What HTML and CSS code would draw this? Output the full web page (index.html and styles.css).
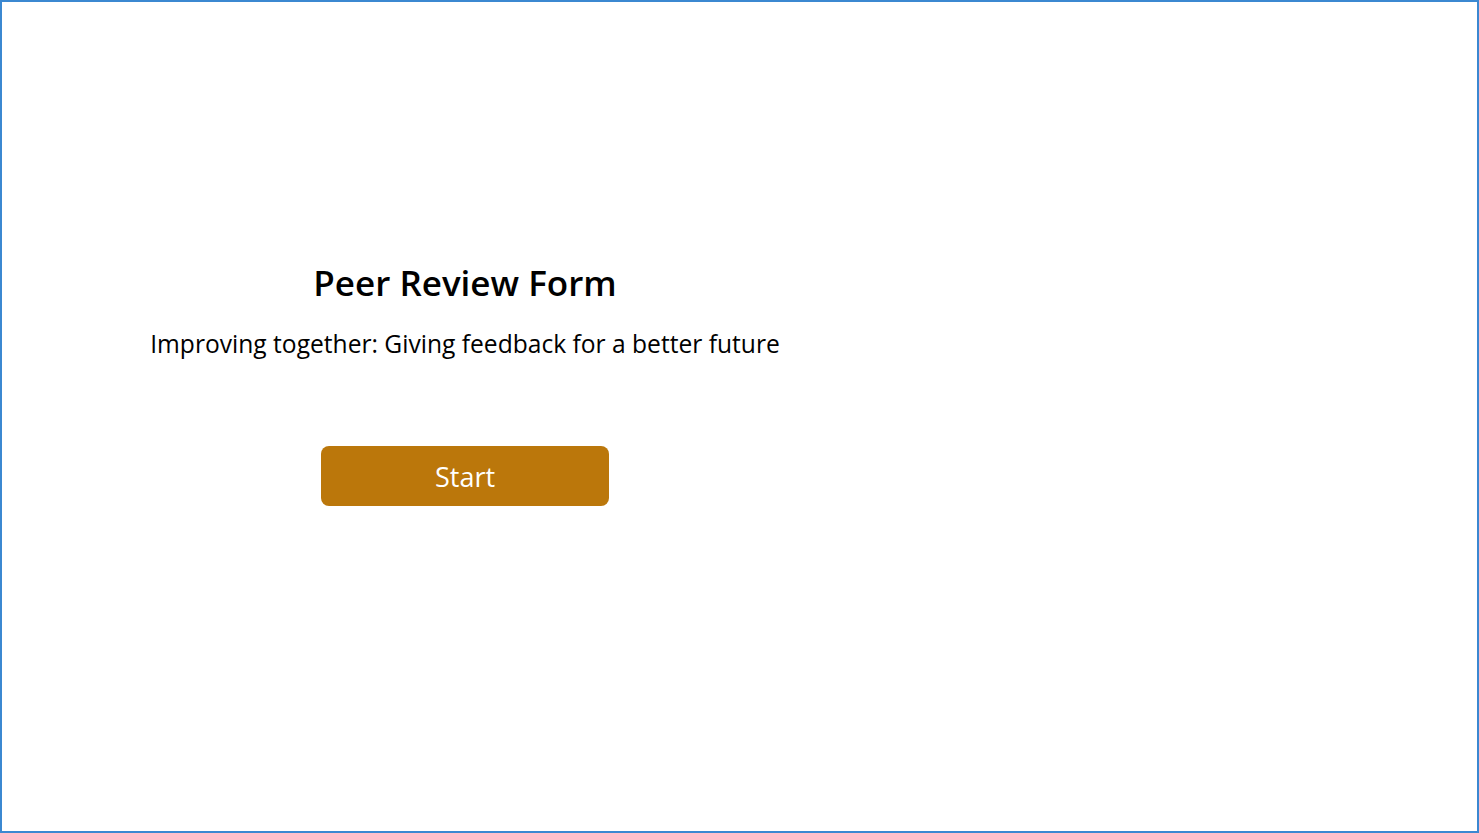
FILE: index.html
```html
<!DOCTYPE html>
<html lang="en">
<head>
    <meta charset="UTF-8">
    <meta name="viewport" content="width=device-width, initial-scale=1.0">
    <title>Peer Review Form</title>
    <link rel="stylesheet" href="styles.css">
</head>
<body>

    <div class="frame">
        <div class="intro">
            <h1>Peer Review Form</h1>
            <p class="subtitle">Improving together: Giving feedback for a better future</p>
            <button class="start-btn">Start</button>
        </div>
    </div>

</body>
</html>
```

FILE: styles.css
```css
* {
    box-sizing: border-box;
}
body {
    font-family: "Open Sans", Arial, sans-serif;
    background-color: #ffffff;
    margin: 0;
    height: 100vh;
}
.frame {
    height: 100vh;
    border: 2px solid #3b88d1;
    display: flex;
}
.intro {
    width: 926px;
    display: flex;
    flex-direction: column;
    align-items: center;
    padding-top: 258px;
}
h1 {
    font-size: 35px;
    font-weight: 600;
    color: #000;
    margin: 0;
    line-height: 46px;
}
.subtitle {
    font-size: 24.6px;
    color: #000;
    margin: 23px 0 0;
    line-height: 30px;
}
.start-btn {
    margin-top: 87px;
    width: 288px;
    height: 60px;
    background-color: #bb770b;
    color: #ffffff;
    border: none;
    border-radius: 8px;
    font-family: "Open Sans", Arial, sans-serif;
    font-size: 27px;
    font-weight: 500;
    cursor: pointer;
}
```
